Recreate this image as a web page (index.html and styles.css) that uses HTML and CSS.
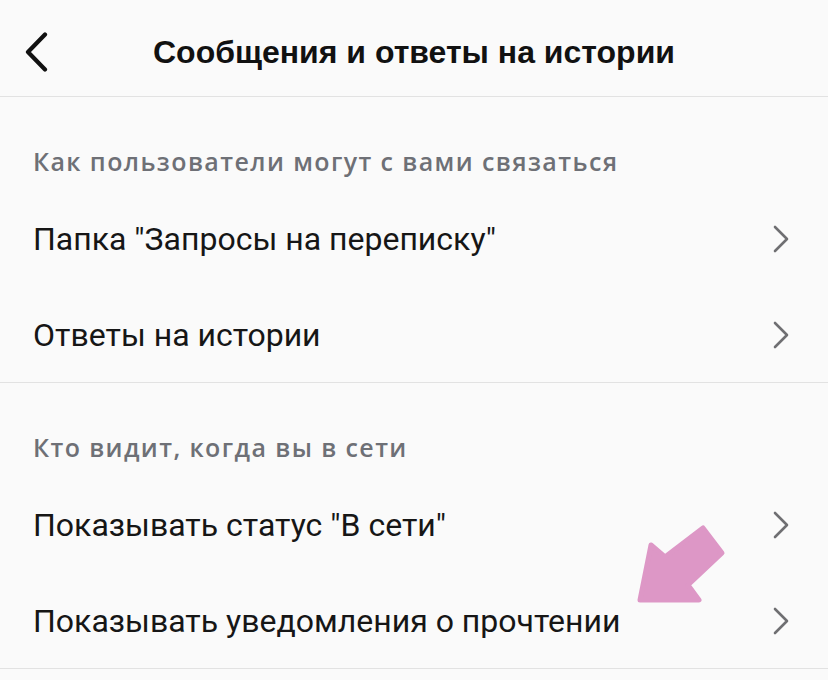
FILE: index.html
```html
<!DOCTYPE html>
<html lang="ru">
<head>
<meta charset="utf-8">
<link rel="stylesheet" href="styles.css">
</head>
<body>
<div class="screen">
  <header class="topbar">
    <svg class="back" width="30" height="40" viewBox="0 0 30 40"><path d="M22 2.5 L5 20 L22 37.5" fill="none" stroke="#111" stroke-width="4.2" stroke-linecap="round" stroke-linejoin="round"/></svg>
    <h1 class="title">Сообщения и ответы на истории</h1>
  </header>
  <section class="group">
    <div class="group-title">Как пользователи могут с вами связаться</div>
    <div class="row"><span>Папка "Запросы на переписку"</span><svg class="chev" width="20" height="28" viewBox="0 0 20 28"><path d="M5 2 L17 14 L5 26" fill="none" stroke="#6f6f72" stroke-width="2.6" stroke-linecap="round" stroke-linejoin="round"/></svg></div>
    <div class="row"><span>Ответы на истории</span><svg class="chev" width="20" height="28" viewBox="0 0 20 28"><path d="M5 2 L17 14 L5 26" fill="none" stroke="#6f6f72" stroke-width="2.6" stroke-linecap="round" stroke-linejoin="round"/></svg></div>
  </section>
  <section class="group">
    <div class="group-title">Кто видит, когда вы в сети</div>
    <div class="row"><span>Показывать статус "В сети"</span><svg class="chev" width="20" height="28" viewBox="0 0 20 28"><path d="M5 2 L17 14 L5 26" fill="none" stroke="#6f6f72" stroke-width="2.6" stroke-linecap="round" stroke-linejoin="round"/></svg></div>
    <div class="row"><span>Показывать уведомления о прочтении</span><svg class="chev" width="20" height="28" viewBox="0 0 20 28"><path d="M5 2 L17 14 L5 26" fill="none" stroke="#6f6f72" stroke-width="2.6" stroke-linecap="round" stroke-linejoin="round"/></svg></div>
  </section>
  <svg class="pointer" width="100" height="90" viewBox="630 520 100 90"><path d="M651 545 L665 557 L703 528 L722 553 L688 585 L699 600 L640 600 Z" fill="#dd97c6" stroke="#dd97c6" stroke-width="5" stroke-linejoin="round"/></svg>
</div>
</body>
</html>
```
FILE: styles.css
```css
* { box-sizing: border-box; }
html, body { margin: 0; padding: 0; background: #fafafa; }
.screen {
  position: relative;
  width: 828px;
  height: 680px;
  overflow: hidden;
  background: #fafafa;
  font-family: Roboto, "Noto Sans", sans-serif;
  color: #161616;
}
.topbar {
  height: 97px;
  border-bottom: 1px solid #e2e2e2;
  display: flex;
  align-items: center;
  padding-left: 23px;
  padding-top: 8px;
}
.back { display: block; flex: none; }
.title {
  margin: 0 0 0 100px;
  font-family: "Liberation Sans", Arial, sans-serif;
  font-weight: 700;
  font-size: 32px;
  line-height: 40px;
  white-space: nowrap;
  color: #111;
}
.group {
  border-bottom: 1px solid #e2e2e2;
}
.group-title {
  height: 94px;
  padding: 49px 0 0 33px;
  font-family: "Open Sans", Roboto, sans-serif;
  font-size: 25px;
  line-height: 30px;
  font-weight: 600;
  color: #6e7076;
  letter-spacing: 1.4px;
}
.row {
  height: 96px;
  display: flex;
  align-items: center;
  justify-content: space-between;
  padding: 0 38px 0 33px;
  font-size: 32px;
}
.row:last-child { height: 95px; }
.chev { display: block; flex: none; }
.pointer {
  position: absolute;
  left: 630px;
  top: 520px;
}
```
